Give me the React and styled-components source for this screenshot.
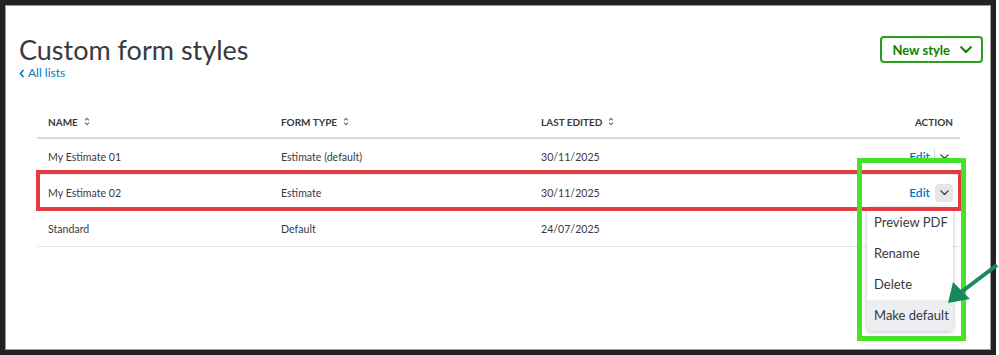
import React from "react";
import styled, { createGlobalStyle } from "styled-components";

const GlobalStyle = createGlobalStyle`
  html, body {
    margin: 0;
    padding: 0;
    background: #ffffff;
  }
  body {
    font-family: "Lato", "Noto Sans", sans-serif;
    color: #393a3d;
  }
`;

const Frame = styled.div`
  position: relative;
  box-sizing: border-box;
  width: 996px;
  height: 355px;
  border: 5px solid #222222;
  box-shadow: inset 0 0 0 1px #9a9a9a;
  background: #ffffff;
`;

const TopBar = styled.div`
  display: flex;
  justify-content: space-between;
  align-items: flex-start;
  padding: 29px 8px 0 14px;
`;

const TitleBlock = styled.div`
  display: flex;
  flex-direction: column;
`;

const Title = styled.h1`
  margin: 0;
  font-size: 27px;
  line-height: 32px;
  font-weight: 400;
  color: #393a3d;
`;

const BackLink = styled.a`
  display: flex;
  align-items: center;
  gap: 3px;
  font-size: 12px;
  line-height: 14px;
  color: #0077c5;
  text-decoration: none;
`;

const NewButton = styled.button`
  display: flex;
  align-items: center;
  gap: 10px;
  margin-top: 2px;
  height: 27px;
  padding: 0 9px 0 10px;
  border: 2px solid #2ca01c;
  border-radius: 4px;
  background: #ffffff;
  color: #108000;
  font-family: "Lato", sans-serif;
  font-weight: 700;
  font-size: 13px;
`;

const Table = styled.div`
  margin: 26px 31px 0 32px;
`;

const Row = styled.div`
  display: grid;
  grid-template-columns: 233px 260px 1fr 120px;
  align-items: center;
  box-sizing: border-box;
  height: ${({ $head }) => ($head ? "33px" : "36px")};
  border-bottom: ${({ $head }) =>
    $head ? "2px solid #d4d7dc" : "1px solid #e3e5e8"};
`;

const HeadCell = styled.div`
  display: flex;
  align-items: center;
  gap: 6px;
  padding-left: 11px;
  font-size: 10px;
  font-weight: 700;
  color: #393a3d;
  justify-content: ${({ $right }) => ($right ? "flex-end" : "flex-start")};
  padding-right: ${({ $right }) => ($right ? "7px" : "0")};
`;

const Cell = styled.div`
  padding-left: 11px;
  font-size: 10.6px;
  color: #393a3d;
`;

const ActionCell = styled.div`
  position: relative;
  display: flex;
  justify-content: flex-end;
  align-items: center;
  padding-right: 7px;
`;

const EditLink = styled.a`
  font-size: 12px;
  font-weight: 600;
  color: #0077c5;
  text-decoration: none;
`;

const Divider = styled.span`
  width: 1px;
  height: 15px;
  margin-left: 4px;
  background: #d4d7dc;
`;

const Toggle = styled.span`
  display: flex;
  align-items: center;
  justify-content: center;
  width: 18px;
  height: 18px;
  margin-left: ${({ $open }) => ($open ? "5px" : "0")};
  border-radius: 4px;
  background: ${({ $open }) => ($open ? "#e3e5e8" : "transparent")};
`;

const Menu = styled.div`
  position: absolute;
  top: 23px;
  right: 7px;
  width: 86px;
  background: #ffffff;
  border-radius: 4px;
  box-shadow: 0 1px 4px rgba(0, 0, 0, 0.25);
  z-index: 2;
  overflow: hidden;
`;

const MenuItem = styled.div`
  height: 31px;
  display: flex;
  align-items: center;
  padding-left: 7px;
  font-size: 13px;
  color: #393a3d;
  background: ${({ $hover }) => ($hover ? "#eceef1" : "transparent")};
`;

const Highlight = styled.div`
  position: absolute;
  box-sizing: border-box;
  border: ${({ $w }) => $w}px solid ${({ $c }) => $c};
  z-index: 3;
  pointer-events: none;
`;

const RedBox = styled(Highlight)`
  left: 31px;
  top: 165px;
  width: 926px;
  height: 41px;
`;

const GreenBox = styled(Highlight)`
  left: 852px;
  top: 153px;
  width: 109px;
  height: 183px;
`;

const ArrowSvg = styled.svg`
  position: absolute;
  left: 935px;
  top: 250px;
  z-index: 4;
  overflow: visible;
`;

const Sort = () => (
  <svg width="6" height="9" viewBox="0 0 6 9">
    <path d="M1 3.3 L3 1.3 L5 3.3 M1 5.7 L3 7.7 L5 5.7" fill="none" stroke="#6b6c72" strokeWidth="1.1" />
  </svg>
);

const Chevron = ({ size = 10, color = "#393a3d", w = 1.6 }) => (
  <svg width={size} height={size * 0.6} viewBox="0 0 10 6">
    <path d="M1 1 L5 5 L9 1" fill="none" stroke={color} strokeWidth={w} strokeLinecap="round" strokeLinejoin="round" />
  </svg>
);

const rows = [
  { name: "My Estimate 01", type: "Estimate (default)", date: "30/11/2025", action: "plain" },
  { name: "My Estimate 02", type: "Estimate", date: "30/11/2025", action: "open" },
  { name: "Standard", type: "Default", date: "24/07/2025", action: "none" },
];

const menu = ["Preview PDF", "Rename", "Delete", "Make default"];

export default function App() {
  return (
    <>
      <GlobalStyle />
      <Frame>
        <TopBar>
          <TitleBlock>
            <Title>Custom form styles</Title>
            <BackLink href="#">
              <svg width="6" height="9" viewBox="0 0 6 9">
                <path d="M4.5 1 L1.5 4.5 L4.5 8" fill="none" stroke="#0077c5" strokeWidth="1.6" />
              </svg>
              All lists
            </BackLink>
          </TitleBlock>
          <NewButton>
            New style
            <Chevron size={12} color="#108000" w={1.7} />
          </NewButton>
        </TopBar>

        <Table>
          <Row $head>
            <HeadCell>NAME <Sort /></HeadCell>
            <HeadCell>FORM TYPE <Sort /></HeadCell>
            <HeadCell>LAST EDITED <Sort /></HeadCell>
            <HeadCell $right>ACTION</HeadCell>
          </Row>
          {rows.map((r) => (
            <Row key={r.name}>
              <Cell>{r.name}</Cell>
              <Cell>{r.type}</Cell>
              <Cell>{r.date}</Cell>
              <ActionCell>
                {r.action !== "none" && (
                  <>
                    <EditLink href="#">Edit</EditLink>
                    {r.action === "plain" && <Divider />}
                    <Toggle $open={r.action === "open"}>
                      <Chevron size={9} color="#393a3d" w={1.5} />
                    </Toggle>
                  </>
                )}
                {r.action === "open" && (
                  <Menu>
                    {menu.map((m) => (
                      <MenuItem key={m} $hover={m === "Make default"}>
                        {m}
                      </MenuItem>
                    ))}
                  </Menu>
                )}
              </ActionCell>
            </Row>
          ))}
        </Table>

        <RedBox $w={4} $c="#e53a40" />
        <GreenBox $w={5} $c="#44e329" />
        <ArrowSvg width="60" height="60" viewBox="0 0 60 60">
          <line x1="57" y1="10" x2="20" y2="38" stroke="#17895c" strokeWidth="4" />
          <polygon points="8,48 13,27 30,44" fill="#17895c" />
        </ArrowSvg>
      </Frame>
    </>
  );
}
